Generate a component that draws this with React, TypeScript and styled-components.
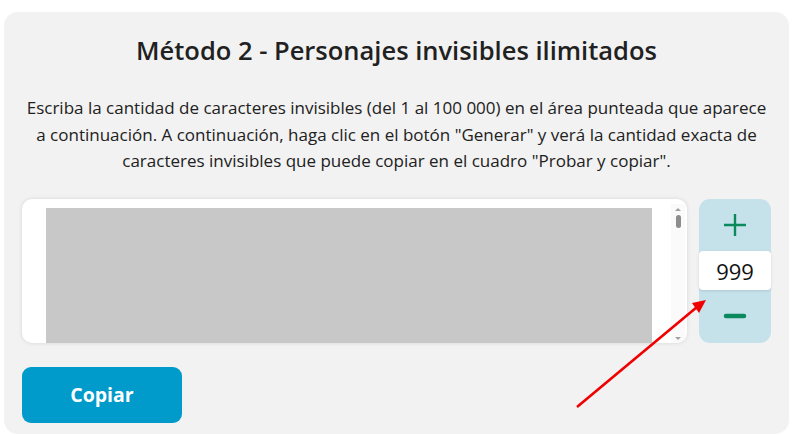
import styled, { createGlobalStyle } from 'styled-components';

const GlobalStyle = createGlobalStyle`
	html, body {
		margin: 0;
		padding: 0;
		background: #ffffff;
	}
	body {
		font-family: 'Open Sans', 'Noto Sans', sans-serif;
		color: #212121;
	}
`;

const App = () => {
	return (
		<>
			<GlobalStyle />
			<Panel>
				<Title>Método 2 - Personajes invisibles ilimitados</Title>
				<Intro>
					Escriba la cantidad de caracteres invisibles (del 1 al 100 000) en el área punteada que aparece
					<br />
					a continuación. A continuación, haga clic en el botón "Generar" y verá la cantidad exacta de
					<br />
					caracteres invisibles que puede copiar en el cuadro "Probar y copiar".
				</Intro>

				<Row>
					<TextBox>
						<Filled />
						<Scrollbar>
							<ScrollArrow $up />
							<Thumb />
							<ScrollArrow />
						</Scrollbar>
					</TextBox>

					<Stepper>
						<StepButton aria-label='más'>
							<svg width='24' height='24' viewBox='0 0 24 24'>
								<path d='M12 1v22M1 12h22' stroke='#0a8a5c' strokeWidth='2.4' fill='none' />
							</svg>
						</StepButton>
						<Count>999</Count>
						<StepButton aria-label='menos'>
							<svg width='24' height='24' viewBox='0 0 24 24'>
								<path d='M3 12h18' stroke='#0a8a5c' strokeWidth='4.5' strokeLinecap='round' fill='none' />
							</svg>
						</StepButton>
					</Stepper>
				</Row>

				<CopyButton>Copiar</CopyButton>

				<Arrow width='795' height='435' viewBox='0 0 795 435'>
					<line x1='577' y1='407' x2='697' y2='307' stroke='#f00000' strokeWidth='2.6' />
					<polygon points='706,300 692,303 699,313' fill='#f00000' />
				</Arrow>
			</Panel>
		</>
	);
};

const Panel = styled.div`
	margin: 12px 6px 0 4px;
	height: 422px;
	box-sizing: border-box;
	padding: 22px 18px 0 18px;
	background: #f2f2f2;
	border-radius: 14px;
	display: flex;
	flex-direction: column;
	align-items: stretch;
`;

const Title = styled.h2`
	margin: 0;
	text-align: center;
	font-size: 25.5px;
	font-weight: 600;
	line-height: 32px;
	color: #212121;
	white-space: nowrap;
`;

const Intro = styled.p`
	margin: 29px -10px 0;
	text-align: center;
	font-size: 17px;
	line-height: 26.5px;
	color: #212121;
	white-space: nowrap;
`;

const Row = styled.div`
	margin-top: 24px;
	display: flex;
	gap: 12px;
	height: 144px;
`;

const TextBox = styled.div`
	flex: 1;
	display: flex;
	background: #ffffff;
	border-radius: 10px;
	box-shadow: 0 0 4px rgba(0, 0, 0, 0.12);
	padding: 9px 0 0 24px;
	overflow: hidden;
`;

const Filled = styled.div`
	width: 606px;
	background: #c8c8c8;
`;

const Scrollbar = styled.div`
	margin-left: auto;
	width: 14px;
	margin-top: -4px;
	margin-right: 2px;
	display: flex;
	flex-direction: column;
	align-items: center;
	background: #fafafa;
`;

const ScrollArrow = styled.div<{ $up?: boolean }>`
	width: 0;
	height: 0;
	border-left: 3px solid transparent;
	border-right: 3px solid transparent;
	${(p) => (p.$up ? 'border-bottom: 3px solid #a0a0a0;' : 'border-top: 3px solid #a0a0a0;')}
	margin: 4px 0;
	${(p) => (p.$up ? '' : 'margin-top: auto; margin-bottom: 3px;')}
`;

const Thumb = styled.div`
	width: 5px;
	height: 13px;
	border-radius: 3px;
	background: #8c8c8c;
`;

const Stepper = styled.div`
	width: 72px;
	display: flex;
	flex-direction: column;
	background: #c5e2eb;
	border-radius: 11px;
`;

const StepButton = styled.button`
	flex: 1;
	border: none;
	background: transparent;
	display: flex;
	align-items: center;
	justify-content: center;
	padding: 0;
	cursor: pointer;
`;

const Count = styled.div`
	height: 39px;
	background: #ffffff;
	border-radius: 4px;
	box-shadow: 0 1px 3px rgba(0, 0, 0, 0.12);
	display: flex;
	align-items: center;
	justify-content: center;
	font-size: 22px;
	font-weight: 500;
	color: #111;
`;

const CopyButton = styled.button`
	margin-top: 24px;
	width: 160px;
	height: 56px;
	border: none;
	border-radius: 9px;
	background: #009bcb;
	color: #ffffff;
	font-family: 'Open Sans', 'Noto Sans', sans-serif;
	font-size: 19.5px;
	font-weight: 700;
	cursor: pointer;
`;

const Arrow = styled.svg`
	position: absolute;
	left: 0;
	top: 0;
	pointer-events: none;
`;

export default App;
